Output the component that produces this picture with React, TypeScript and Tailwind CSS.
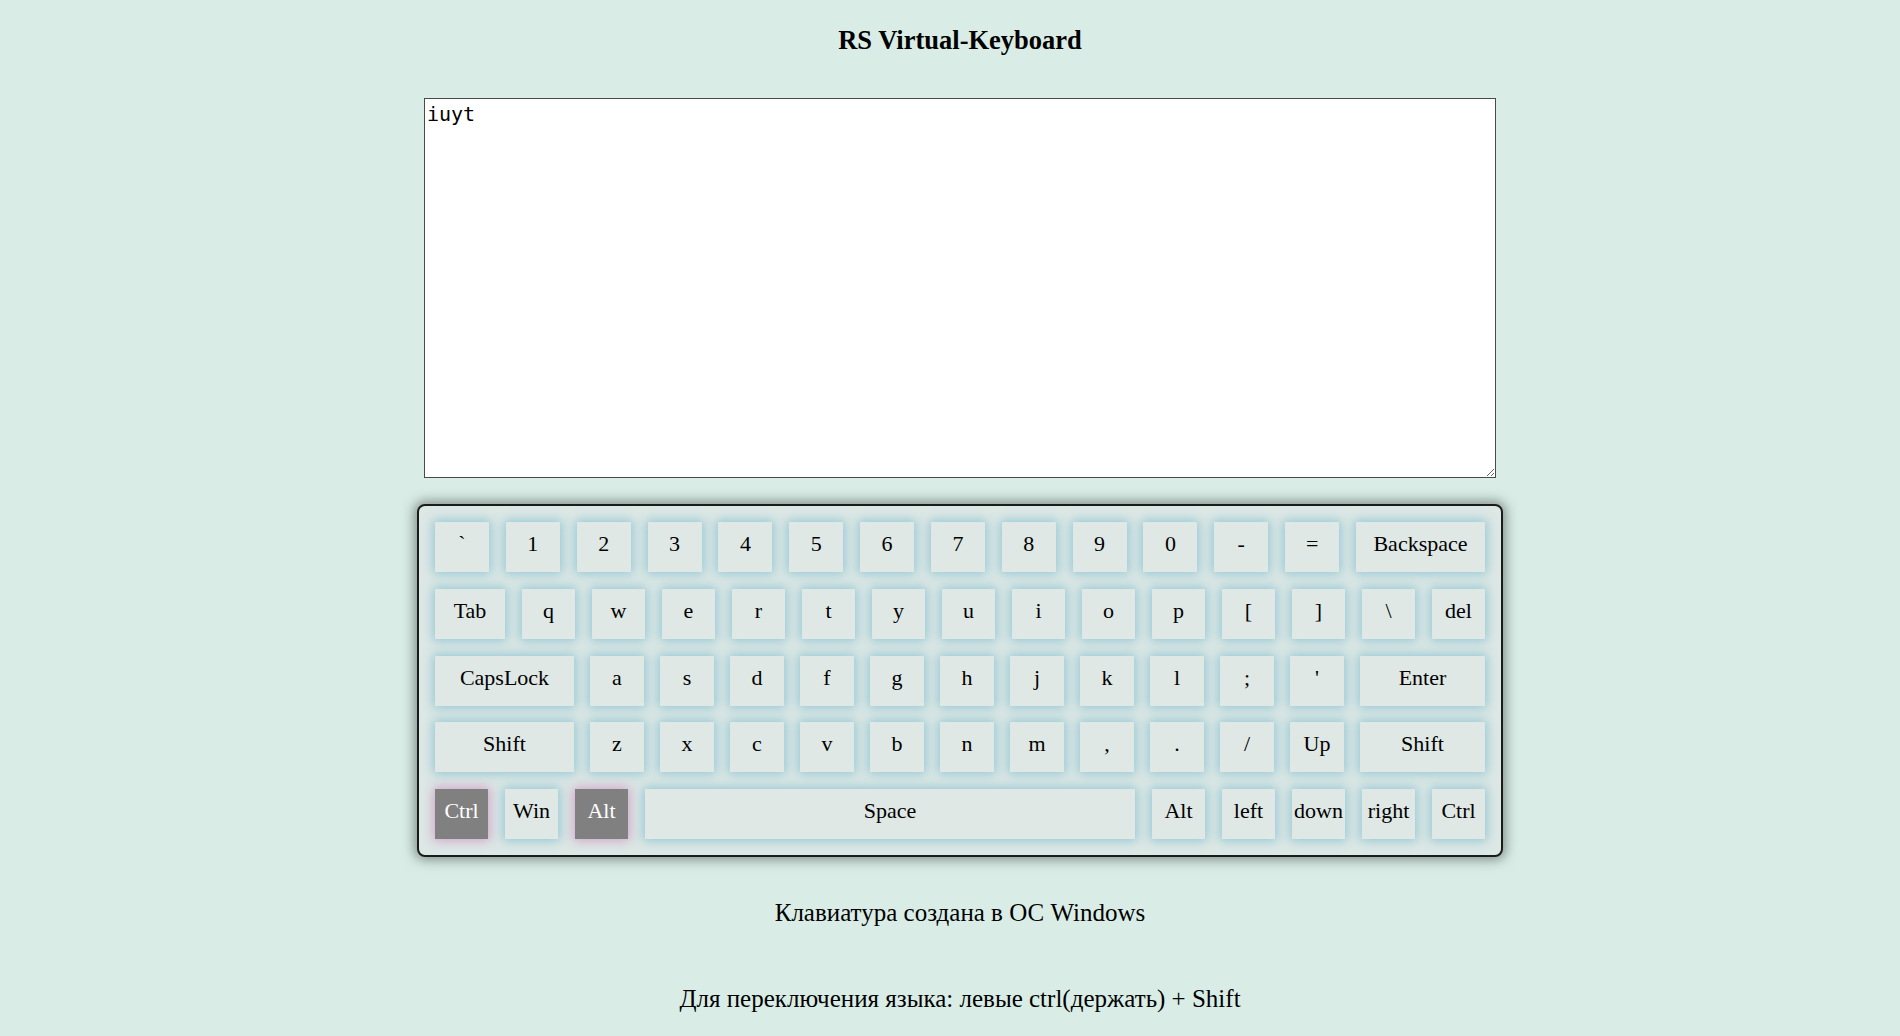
import React from "react";

type K = { label: string; w: string; active?: boolean };

const k = (label: string, w = "w-[54px]", active = false): K => ({ label, w, active });

const rows: K[][] = [
  [
    ...["`", "1", "2", "3", "4", "5", "6", "7", "8", "9", "0", "-", "="].map((l) => k(l)),
    k("Backspace", "w-[129px]"),
  ],
  [
    k("Tab", "w-[70px]"),
    ...["q", "w", "e", "r", "t", "y", "u", "i", "o", "p", "[", "]", "\\", "del"].map((l) => k(l, "w-[53px]")),
  ],
  [
    k("CapsLock", "w-[139px]"),
    ...["a", "s", "d", "f", "g", "h", "j", "k", "l", ";", "'"].map((l) => k(l)),
    k("Enter", "w-[125px]"),
  ],
  [
    k("Shift", "w-[139px]"),
    ...["z", "x", "c", "v", "b", "n", "m", ",", ".", "/", "Up"].map((l) => k(l)),
    k("Shift", "w-[125px]"),
  ],
  [
    k("Ctrl", "w-[53px]", true),
    k("Win", "w-[53px]"),
    k("Alt", "w-[53px]", true),
    k("Space", "w-[490px]"),
    ...["Alt", "left", "down", "right", "Ctrl"].map((l) => k(l, "w-[53px]")),
  ],
];

function Key({ label, w, active }: K) {
  return (
    <div
      className={
        active
          ? `${w} h-[50px] flex items-center justify-center pb-[7px] bg-[#808080] text-white shadow-[0_0_10px_2px_rgba(205,150,195,0.8)]`
          : `${w} h-[50px] flex items-center justify-center pb-[7px] bg-[#dfe8e5] text-black shadow-[0_0_10px_2px_rgba(130,190,208,0.8)]`
      }
    >
      {label}
    </div>
  );
}

export default function App() {
  return (
    <div className="min-h-[1036px] bg-[#d9ede6] pl-[20px] flex flex-col items-center font-['Liberation_Serif',serif] text-black">
      <h1 className="mt-[25px] text-[26.5px] leading-[30px] font-bold">RS Virtual-Keyboard</h1>

      <textarea
        className="mt-[43px] w-[1072px] h-[380px] bg-white border border-[#4a4a4a] p-[2px] pt-[3px] font-['DejaVu_Sans_Mono',monospace] text-[20px] leading-[24px] outline-none"
        defaultValue="iuyt"
      />

      <div className="mt-[26px] w-[1086px] rounded-[8px] border-2 border-[#1b1b1b] bg-[#dde8e5] px-[16px] py-[16px] flex flex-col gap-[16.75px] text-[22px] shadow-[0_0_12px_3px_rgba(60,70,65,0.55)]">
        {rows.map((row, i) => (
          <div key={i} className="flex justify-between">
            {row.map((key, j) => (
              <Key key={j} {...key} />
            ))}
          </div>
        ))}
      </div>

      <p className="mt-[41px] text-[25px] leading-[30px]">Клавиатура создана в ОС Windows</p>
      <p className="mt-[56px] text-[25px] leading-[30px]">Для переключения языка: левые ctrl(держать) + Shift</p>
    </div>
  );
}
